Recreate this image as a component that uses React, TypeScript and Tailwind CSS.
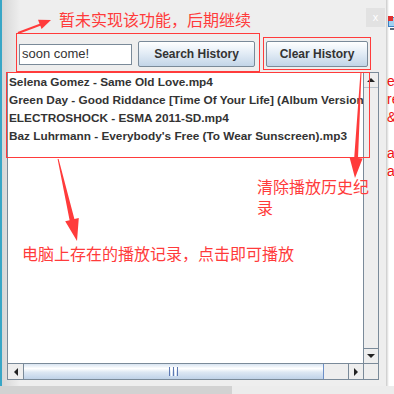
import React from "react";

const rows = [
  "Selena Gomez - Same Old Love.mp4",
  "Green Day - Good Riddance [Time Of Your Life] (Album Version)",
  "ELECTROSHOCK - ESMA 2011-SD.mp4",
  "Baz Luhrmann - Everybody's Free (To Wear Sunscreen).mp3",
];

const metalBtn =
  "h-[26px] flex items-center justify-center border border-[#7a8a99] rounded-[2px] bg-[linear-gradient(to_bottom,#ffffff,#e4edf6_45%,#c3d5e8)] text-[12px] font-bold text-[#333333]";

const Tri = ({ dir }: { dir: "up" | "down" | "left" | "right" }) => {
  const pts = {
    up: "0,5 4,1 8,5",
    down: "0,1 8,1 4,5",
    left: "5,0 1,4 5,8",
    right: "1,0 5,4 1,8",
  }[dir];
  const size = dir === "up" || dir === "down" ? { w: 8, h: 6 } : { w: 6, h: 8 };
  return (
    <svg width={size.w} height={size.h} viewBox={`0 0 ${size.w} ${size.h}`}>
      <polygon points={pts} fill="#222" />
    </svg>
  );
};

const Annotations = () => (
  <>
    <svg className="absolute left-0 top-0 pointer-events-none" width={394} height={394}>
      {/* boxes */}
      <rect x={16.5} y={33.5} width={243} height={38} fill="none" stroke="#ff3b3b" />
      <rect x={263.5} y={37.5} width={107} height={32} fill="none" stroke="#ff3b3b" />
      <rect x={6.5} y={72.5} width={363} height={85} fill="none" stroke="#ff3b3b" />
      {/* arrow to top note */}
      <line x1={18} y1={33} x2={42} y2={24} stroke="#ff3b3b" strokeWidth={2} />
      <polygon points="51,20 41.6,29 38,19.8" fill="#ff3b3b" />
      {/* arrow down from list */}
      <polygon
        points="57.6,159 69.6,220.2 65.2,221.2 77,241 78.8,218 74.4,219 58.6,159"
        fill="#ff3b3b"
      />
      {/* arrow down from clear button */}
      <polygon
        points="360.5,72 354.2,158 349.6,157.6 355,178 362.6,158.4 358,158 361.5,72"
        fill="#ff3b3b"
      />
    </svg>
    <div className="absolute left-[59px] top-[8px] text-[16px] leading-[22px] text-[#ff3b3b] whitespace-nowrap font-['Noto_Sans_CJK_SC',sans-serif]">
      暂未实现该功能，后期继续
    </div>
    <div className="absolute left-[257px] top-[176px] w-[116px] text-[16px] leading-[21px] text-[#ff3b3b] font-['Noto_Sans_CJK_SC',sans-serif]">
      清除播放历史纪录
    </div>
    <div className="absolute left-[22px] top-[242px] text-[16px] leading-[22px] text-[#ff3b3b] whitespace-nowrap font-['Noto_Sans_CJK_SC',sans-serif]">
      电脑上存在的播放记录，点击即可播放
    </div>
  </>
);

export default function App() {
  return (
    <div className="relative w-[394px] h-[394px] overflow-hidden bg-white font-['Liberation_Sans',Arial,sans-serif]">
      <div className="flex h-[386px]">
        {/* dialog */}
        <div className="w-[386px] h-full flex flex-col border-l-2 border-[#38a6c6] bg-[linear-gradient(to_right,#d6d6d6,#eeeeee_18px)]">
          <div className="h-[41px] flex justify-end items-start">
            <div className="mt-[8px] mr-[1px] w-[19px] h-[19px] bg-[#e2e2e2] flex items-center justify-center text-[11px] leading-none text-white">
              x
            </div>
          </div>
          <div className="h-[26px] flex items-center pl-[17px]">
            <div className="w-[113px] h-[21px] border border-[#7a8a99] bg-white flex items-center pl-[2px] text-[13px] text-[#333333]">
              soon come!
            </div>
            <button className={`${metalBtn} ml-[6px] w-[117px]`}>Search History</button>
            <button className={`${metalBtn} ml-[11px] w-[102px]`}>Clear History</button>
          </div>
          {/* scroll pane */}
          <div className="mt-[5px] ml-[5px] w-[372px] h-[308px] border border-[#7a8a99] flex flex-col bg-white">
            <div className="flex flex-1 min-h-0">
              <div className="flex-1 min-w-0 overflow-hidden pt-[1px] pl-[1px]">
                {rows.map((r) => (
                  <div
                    key={r}
                    className="h-[18px] flex items-center whitespace-nowrap text-[11.8px] font-bold text-[#333333]"
                  >
                    {r}
                  </div>
                ))}
              </div>
              <div className="w-[15px] flex flex-col border-l border-[#7a8a99] bg-[#eeeeee]">
                <div className="h-[15px] flex items-center justify-center border-b border-[#b8c2cc]">
                  <Tri dir="up" />
                </div>
                <div className="flex-1" />
                <div className="h-[15px] flex items-center justify-center border-t border-[#7a8a99]">
                  <Tri dir="down" />
                </div>
              </div>
            </div>
            <div className="h-[16px] flex border-t border-[#7a8a99] bg-[#eeeeee]">
              <div className="w-[16px] flex items-center justify-center border-r border-[#7a8a99]">
                <Tri dir="left" />
              </div>
              <div className="w-[300px] flex items-center justify-center border-r border-[#6c8fc7] bg-[linear-gradient(to_bottom,#d8e4f1,#ffffff_30%,#dce7f3_55%,#bfd2e8)]">
                <div className="flex gap-[1px]">
                  <div className="w-[1px] h-[9px] bg-[#5d79b3]" />
                  <div className="w-[1px] h-[9px] bg-[#ffffff]" />
                  <div className="w-[1px] h-[9px] bg-[#5d79b3]" />
                  <div className="w-[1px] h-[9px] bg-[#ffffff]" />
                  <div className="w-[1px] h-[9px] bg-[#5d79b3]" />
                </div>
              </div>
              <div className="flex-1" />
              <div className="w-[15px] flex items-center justify-center border-l border-[#7a8a99]">
                <Tri dir="right" />
              </div>
              <div className="w-[15px] border-l border-[#7a8a99]" />
            </div>
          </div>
        </div>
        {/* desktop behind */}
        <div className="relative flex-1 overflow-hidden bg-[linear-gradient(to_right,#c9c9c9,#ffffff_3px)]">
          <svg className="absolute left-[2px] top-[16px]" width={8} height={16} viewBox="0 0 8 16">
            <rect x={0} y={1} width={8} height={10} fill="#3b7fc4" />
            <rect x={1} y={2} width={7} height={8} fill="#9fd0f0" />
            <rect x={0} y={0} width={5} height={5} fill="#e03030" />
            <rect x={2} y={12} width={6} height={2} fill="#5a6a7a" />
          </svg>
          <div className="absolute left-[1px] top-[72px] text-[14px] leading-[18px] text-[#ee1111] whitespace-nowrap">
            <div>e</div>
            <div>re</div>
            <div>&amp;</div>
            <div className="h-[18px]" />
            <div>ac</div>
            <div>ac</div>
          </div>
        </div>
      </div>
      <div className="flex h-[8px]">
        <div className="w-[232px] bg-[#d2d2d2]" />
        <div className="flex-1 bg-[#ececec]" />
      </div>
      <Annotations />
    </div>
  );
}
